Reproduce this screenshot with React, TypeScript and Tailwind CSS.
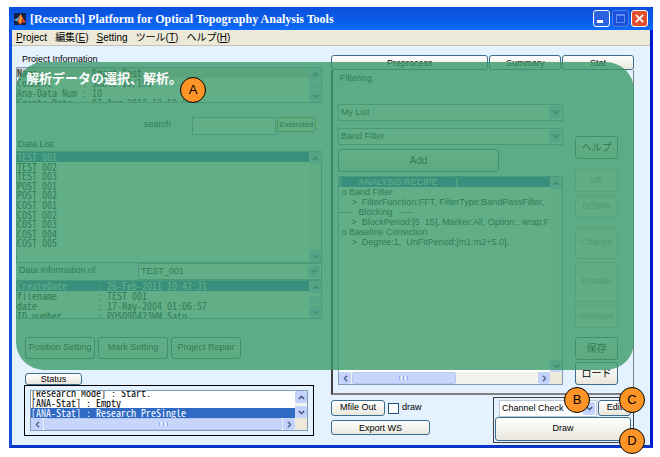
import type { ReactNode } from "react";
import { ChevronDown, ChevronLeft, ChevronRight, ChevronUp } from "lucide-react";

const mono = "font-['Noto_Sans_Mono_CJK_JP','Liberation_Mono',monospace] text-[10px]";
const button =
  "rounded-[3px] border border-[#3d6d8c] bg-gradient-to-b from-white to-[#e9e7dd] text-black whitespace-nowrap disabled:border-[#c9c7ba] disabled:bg-none disabled:bg-[#f5f4ea] disabled:text-[#a1a192]";
const arrow =
  "flex shrink-0 items-center justify-center rounded-[2px] bg-[#c3d3fd] text-[#4d6185]";

function ScrollBar({ thumb = false }: { thumb?: boolean }) {
  return (
    <div className="flex w-3 shrink-0 flex-col justify-between bg-[#f3f3ee]">
      <div className={`${arrow} h-3`}>
        <ChevronUp size={9} strokeWidth={4} />
      </div>
      {thumb && <div className="h-2 rounded-[2px] bg-[#c8d6fb]" />}
      <div className={`${arrow} h-3`}>
        <ChevronDown size={9} strokeWidth={4} />
      </div>
    </div>
  );
}

function HorizontalBar({ size }: { size: string }) {
  return (
    <div className="flex h-3 shrink-0 bg-[#f3f3ee]">
      <div className={`${arrow} w-3`}>
        <ChevronLeft size={9} strokeWidth={4} />
      </div>
      <div className="flex-1 px-px">
        <div
          className={`${size} flex h-3 items-center justify-center gap-px rounded-[2px] border border-[#b4c8f6] bg-[#c8d6fb]`}
        >
          <i className="h-1 w-px bg-[#8cb0f8]" />
          <i className="h-1 w-px bg-white" />
          <i className="h-1 w-px bg-[#8cb0f8]" />
          <i className="h-1 w-px bg-white" />
          <i className="h-1 w-px bg-[#8cb0f8]" />
        </div>
      </div>
      <div className={`${arrow} w-3`}>
        <ChevronRight size={9} strokeWidth={4} />
      </div>
      <div className="w-3 bg-[#ece9d8]" />
    </div>
  );
}

function Select({ label, value, className }: { label: string; value: string; className: string }) {
  return (
    <div className={`relative border bg-white ${className}`}>
      <select aria-label={label} className="h-full w-full appearance-none bg-transparent pt-px pr-4 pl-0.5 outline-none">
        <option>{value}</option>
      </select>
      <span className={`${arrow} pointer-events-none absolute inset-y-px right-px w-3`}>
        <ChevronDown size={9} strokeWidth={4} />
      </span>
    </div>
  );
}

function Badge({ children, className }: { children: ReactNode; className: string }) {
  return (
    <div
      className={`absolute flex size-[26px] items-center justify-center rounded-full border border-black bg-[#ff9427] text-[13px] ${className}`}
    >
      {children}
    </div>
  );
}

const files = [
  "TEST 001", "TEST 002", "TEST 003", "POST 001", "POST 002",
  "COST 001", "COST 002", "COST 003", "COST 004", "COST 005",
];

const recipe = [
  "[       ANALYSIS RECIPE       ]",
  " o Band Filter",
  "     >  FilterFunction:FFT, FilterType:BandPassFilter,",
  "----   Blocking   ----",
  "     >  BlockPeriod:[5  15], Marker:All, Option:, wrap:F",
  " o Baseline Correction",
  "     >  Degree:1,  UnFitPeriod:[m1:m2+5.0],",
];

function ProjectPanel() {
  return (
    <section className="flex min-w-0 flex-[306] flex-col">
      <h2 className="mt-[5px] h-4 pl-[6px] leading-4">Project Information</h2>
      <div className="flex h-9 border border-[#7f9db9] bg-white">
        <ul className={`${mono} flex-1 overflow-hidden leading-[10px] whitespace-pre`}>
          <li className="bg-[#d4d0c8]">Name         : Smart Test</li>
          <li>Comment      : Small 10/100</li>
          <li>Ana-Data Num : 10</li>
          <li>Create Date  : 07-Aug-2012 12:50:01</li>
        </ul>
        <ScrollBar thumb />
      </div>
      <div className="mt-[14px] flex h-[18px] pr-[6px]">
        <label htmlFor="search" className="ml-auto pr-[21px] leading-[14px]">search</label>
        <input id="search" className="w-[84px] border border-[#7f9db9] bg-white px-1 outline-none" />
        <button className="ml-px h-[15px] w-[39px] rounded-[3px] border border-[#b58a2a] bg-[#f5f3ea] text-[8px]">
          Extended
        </button>
      </div>
      <h2 className="h-4 pt-[2px] pl-[2px] leading-[14px]">Data List</h2>
      <div className="flex h-[112px] border border-[#7f9db9] bg-white">
        <ul className={`${mono} grid h-24 flex-1 grid-rows-10 leading-[10px]`}>
          {files.map((name, i) => (
            <li key={name} className={i === 0 ? "bg-[#316ac5] text-white" : ""}>{name}</li>
          ))}
        </ul>
        <ScrollBar />
      </div>
      <div className="flex h-[17px] pl-[3px]">
        <span className="flex-1 leading-[15px]">Data Information of</span>
        <Select label="Data Information of" value="TEST_001" className="w-[184px] border-[#7f9db9]" />
      </div>
      <div className="flex h-[39px] border border-[#7f9db9] bg-white">
        <ul className={`${mono} flex-1 overflow-hidden leading-[10px] whitespace-pre`}>
          <li className="bg-[#316ac5] text-white">CreateDate      : 26-Feb-2011 10:42:31</li>
          <li>filename        : TEST 001</li>
          <li>date            : 17-May-2004 01:06:57</li>
          <li>ID_number       : POS090423WM_Sato</li>
        </ul>
        <ScrollBar thumb />
      </div>
      <div className="mt-[18px] flex gap-[3px] pl-[9px]">
        <button className={`${button} h-[22px] w-[70px]`}>Position Setting</button>
        <button className={`${button} h-[22px] w-[70px]`}>Mark Setting</button>
        <button className={`${button} h-[22px] w-[70px]`}>Project Repair</button>
      </div>
      <button className={`${button} mt-[14px] ml-[9px] h-3 w-[57px] leading-[10px]`}>Status</button>
      <div className="mx-2 border border-black px-[5px] py-1">
        <div className="border border-[#7f9db9] bg-white">
          <div className="flex h-[27px]">
            <ul className={`${mono} flex flex-1 flex-col justify-end overflow-hidden leading-[10px] whitespace-pre`}>
              <li>[Research Mode] : Start.</li>
              <li>[ANA-Stat] : Empty</li>
              <li className="bg-[#316ac5] text-white">[ANA-Stat] : Research PreSingle</li>
            </ul>
            <ScrollBar />
          </div>
          <HorizontalBar size="w-full" />
        </div>
      </div>
    </section>
  );
}

function AnalysisPanel() {
  return (
    <section className="flex min-w-0 flex-[303] flex-col">
      <div className="mt-[9px] flex h-[15px] gap-px">
        <button className={`${button} flex-[158] leading-[14px]`}>Preprocess</button>
        <button className={`${button} flex-[71] leading-[14px]`}>Summary</button>
        <button className={`${button} flex-[71] leading-[14px]`}>Stat</button>
      </div>
      <div className="flex h-[325px] gap-3 border-2 border-t-0 border-[#808080] border-r border-l-[#404040] pr-[15px] pl-[5px]">
        <div className="flex min-w-0 flex-1 flex-col">
          <h2 className="mt-[3px] h-[11px] pl-[2px] leading-[11px]">Filtering</h2>
          <Select label="Filter list" value="My List" className="mt-[20px] h-[17px] border-[#7f9db9]" />
          <Select label="Filter" value="Band Filter" className="mt-[7px] h-[17px] border-[#7f9db9]" />
          <button className={`${button} mt-[4px] mr-16 h-[23px] text-[10px]`}>Add</button>
          <div className="mt-[4px] flex h-[209px] flex-col border border-[#7f9db9] bg-white">
            <div className="flex flex-1">
              <ul className="min-w-0 flex-1 overflow-hidden leading-[10px] whitespace-pre">
                {recipe.map((line, i) => (
                  <li key={line} className={i === 0 ? "bg-[#316ac5] text-white" : ""}>{line}</li>
                ))}
              </ul>
              <ScrollBar />
            </div>
            <HorizontalBar size="w-[56%]" />
          </div>
        </div>
        <div className="flex w-[43px] flex-col pt-[66px]">
          <button className={`${button} h-[23px] text-[10px]`}>ヘルプ</button>
          <button disabled className={`${button} mt-[10px] h-[23px]`}>UP</button>
          <button disabled className={`${button} mt-[3px] h-[23px]`}>DOWN</button>
          <button disabled className={`${button} mt-[9px] h-8`}>Change</button>
          <button disabled className={`${button} mt-[3px] h-10`}>Disable</button>
          <button disabled className={`${button} mt-[3px] h-[23px]`}>Remove</button>
          <button className={`${button} mt-[9px] h-[23px] text-[10px]`}>保存</button>
          <button className={`${button} mt-[2px] h-[23px] text-[10px]`}>ロード</button>
        </div>
      </div>
      <div className="mt-[2px] flex justify-between">
        <div className="flex flex-col gap-[4px] pt-[3px]">
          <div className="flex items-center">
            <button className={`${button} h-4 w-[54px]`}>Mfile Out</button>
            <input
              id="draw"
              type="checkbox"
              className="ml-[3px] size-[11px] appearance-none border border-[#1c5180] bg-white"
            />
            <label htmlFor="draw" className="pl-[3px]">draw</label>
          </div>
          <button className={`${button} h-[15px] w-[99px] leading-3`}>Export WS</button>
        </div>
        <div className="w-[141px] border border-[#404040] p-px pr-[2px]">
          <div className="flex h-[18px] justify-end gap-px pt-px">
            <Select label="Plot" value="Channel Check" className="h-[17px] w-[98px] border-[#b8c8d8]" />
            <button className={`${button} h-4 w-[33px]`}>Edit</button>
          </div>
          <button className={`${button} h-6 w-full`}>Draw</button>
        </div>
      </div>
    </section>
  );
}

function MenuItem({ children }: { children: ReactNode }) {
  return <button className="whitespace-nowrap">{children}</button>;
}

export default function App() {
  return (
    <main className="min-h-screen bg-white pt-[7px] pr-[7px] pl-[9px] font-['Liberation_Sans','Noto_Sans_CJK_JP',sans-serif] text-[9px] text-black">
      <div className="relative border-x-[3px] border-b-[3px] border-x-[#1450e0] border-r-[#0019cf] border-b-[#0a35c8] bg-[#e4f1fe]">
        <header className="-mx-[3px] flex h-[23px] items-center rounded-t-[3px] bg-gradient-to-b from-[#0a50dc] via-[#0a5ae6] to-[#0a6cff] pr-[5px] pl-[5px]">
          <svg viewBox="0 0 14 14" className="size-3" aria-hidden="true">
            <rect width="14" height="14" fill="#10224c" />
            <path d="M0 8l4-2 4-5 2 4 4 6-4 0-3 3-3-4z" fill="#d6451c" />
            <path d="M0 8l4-2 3-3-3 7z" fill="#49b3d8" />
            <path d="M8 1l1 5-2 7-1-3z" fill="#ffc23c" />
          </svg>
          <h1 className="flex-1 pl-[4px] font-['Liberation_Serif',serif] text-[12px] font-bold text-white">
            [Research] Platform for Optical Topography Analysis Tools
          </h1>
          <div className="flex gap-[2px]">
            <button aria-label="Minimize" className="flex size-[17px] items-end rounded-[3px] border border-white bg-[#2b62e0] p-[3px]">
              <span className="h-[3px] w-[6px] bg-white" />
            </button>
            <button aria-label="Maximize" className="size-[17px] rounded-[3px] border border-[#4a80f0] bg-[#1c50d8] p-[3px]">
              <span className="block size-full border border-t-2 border-[#5c8cf4]" />
            </button>
            <button aria-label="Close" className="size-[17px] rounded-[3px] border border-white bg-[#e0502c] p-[3px]">
              <svg viewBox="0 0 11 11" className="size-full" stroke="white" strokeWidth="2">
                <path d="M1 1l9 9M10 1l-9 9" />
              </svg>
            </button>
          </div>
        </header>
        <nav className="flex h-4 gap-2 border-b border-[#c5c2b4] bg-[#ece9d8] pl-[4px] text-[10px] leading-[15px]">
          <MenuItem><u>P</u>roject</MenuItem>
          <MenuItem>編集(<u>E</u>)</MenuItem>
          <MenuItem><u>S</u>etting</MenuItem>
          <MenuItem>ツール(<u>T</u>)</MenuItem>
          <MenuItem>ヘルプ(<u>H</u>)</MenuItem>
        </nav>
        <div className="flex gap-[9px] pr-4 pb-[2px] pl-1">
          <ProjectPanel />
          <AnalysisPanel />
        </div>
        <div className="absolute top-[55px] right-4 left-1 h-[308px] rounded-[28px] bg-[#3b9a69]/80 pt-[7px] pl-[10px] text-[13px] leading-5 font-bold text-white">
          解析データの選択、解析。
        </div>
        <Badge className="top-[70px] left-[168px]">A</Badge>
        <Badge className="right-[60px] bottom-[32px]">B</Badge>
        <Badge className="right-[5px] bottom-[32px]">C</Badge>
        <Badge className="right-[5px] -bottom-[9px]">D</Badge>
      </div>
    </main>
  );
}
